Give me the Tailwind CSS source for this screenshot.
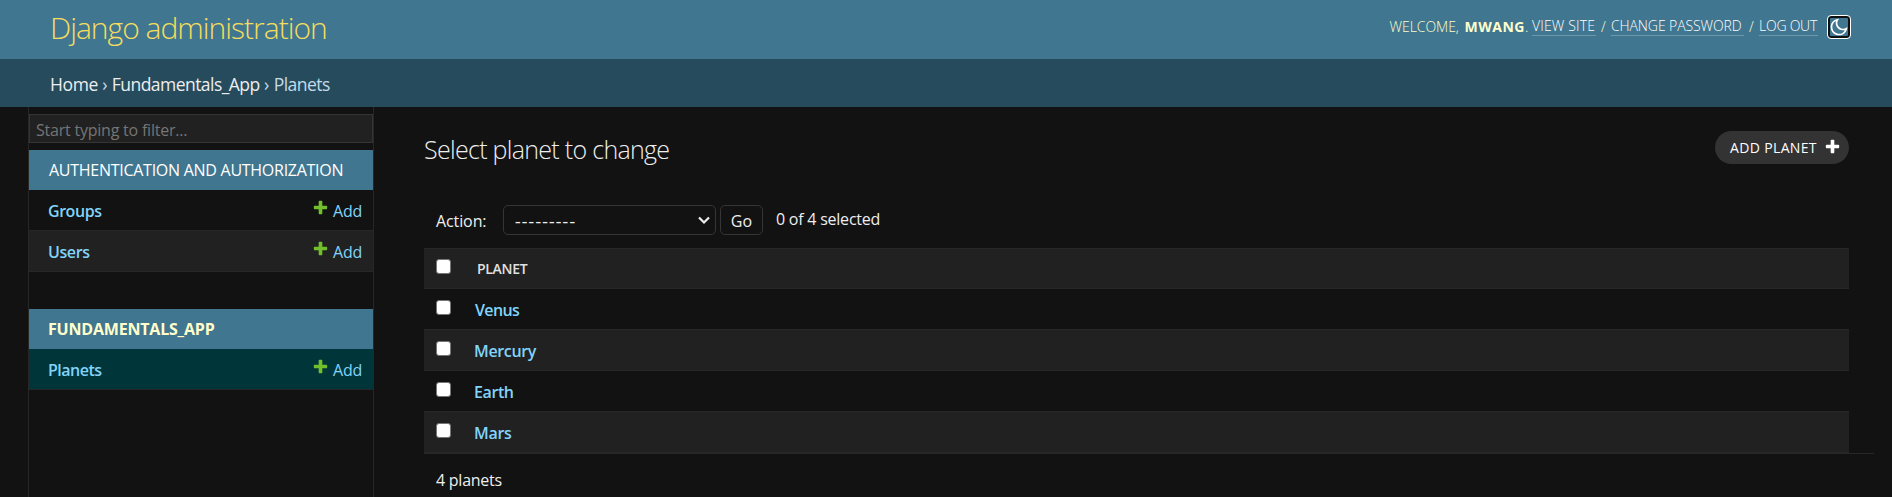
<!DOCTYPE html>
<html lang="en">
<head>
<meta charset="utf-8">
<title>Select planet to change | Django site admin</title>
<script src="https://cdn.jsdelivr.net/npm/@tailwindcss/browser@4"></script>
</head>
<body class="h-[497px] overflow-hidden bg-[#121212] font-['Open_Sans','Noto_Sans',sans-serif] text-base leading-5 text-[#eee]">
<svg class="hidden">
  <symbol id="plus" viewBox="0 0 1792 1792"><path d="M1600 796v192q0 40-28 68t-68 28h-416v416q0 40-28 68t-68 28h-192q-40 0-68-28t-28-68v-416h-416q-40 0-68-28t-28-68v-192q0-40 28-68t68-28h416v-416q0-40 28-68t68-28h192q40 0 68 28t28 68v416h416q40 0 68 28t28 68z"/></symbol>
</svg>

<header class="flex h-[59px] justify-between bg-[#417690] pl-[50px] pr-[41px]">
  <h1 class="pt-2 text-[30px] leading-[40px] font-light tracking-[-1px] whitespace-nowrap text-[#f5dd5d]">Django administration</h1>
  <div class="flex h-[54px] items-center text-sm font-[350] whitespace-nowrap text-[#ffc]">
    <span class="w-[75px] tracking-[-0.05px]">WELCOME,</span>
    <strong class="font-bold tracking-[0.5px]">MWANG</strong><span class="w-[7px]">.</span>
    <a class="h-[18px] w-[64px] border-b border-white/25 leading-[16px] tracking-[0.15px] text-white">VIEW SITE</a>
    <span class="w-[15px] text-center">/</span>
    <a class="h-[18px] w-[133px] border-b border-white/25 leading-[16px] tracking-[-0.1px] text-white">CHANGE PASSWORD</a>
    <span class="w-[15px] text-center">/</span>
    <a class="h-[18px] w-[59px] border-b border-white/25 leading-[16px] tracking-[-0.25px] text-white">LOG OUT</a>
    <button class="ml-[9px] flex size-6 items-center justify-center rounded-[4px] border border-white bg-[#417690] ring-2 ring-[#101010] ring-inset">
      <svg class="size-5 shrink-0" viewBox="0 0 24 24" fill="#fff"><path d="M10 7a7 7 0 0 0 12 4.9v.1c0 5.523-4.477 10-10 10S2 17.523 2 12 6.477 2 12 2h.1A6.979 6.979 0 0 0 10 7zm-6 5a8 8 0 0 0 15.062 3.762A9 9 0 0 1 8.238 4.938 7.999 7.999 0 0 0 4 12z"/></svg>
    </button>
  </div>
</header>

<nav class="flex h-12 bg-[#264b5d] pt-[13px] pl-[50px] text-[17.5px] leading-6 whitespace-nowrap text-[#c4dce8]">
  <a class="tracking-[-0.4px] text-[#eee]">Home</a><span class="w-[14px] text-center">›</span>
  <a class="tracking-[-0.55px] text-[#eee]">Fundamentals_App</a><span class="w-[14px] text-center">›</span>
  <span class="tracking-[-0.5px]">Planets</span>
</nav>

<div class="flex h-[390px]">
  <aside class="ml-7 w-[346px] shrink-0 border-x border-[#272727] pt-[7px] whitespace-nowrap">
    <div class="h-[29px] border border-[#353535] bg-[#212121] pt-[5px] pl-[6px] tracking-[-0.22px] text-[#757575]">Start typing to filter...</div>

    <h2 class="mt-[7px] h-10 bg-[#417690] pt-[10px] pl-5 tracking-[-0.27px] text-white">AUTHENTICATION AND AUTHORIZATION</h2>
    <div class="flex h-[41px] justify-between border-b border-[#272727] pt-[11px] pr-[11px] pl-[19px] text-[#81d4fa]">
      <a class="font-semibold tracking-[-0.45px]">Groups</a>
      <a class="flex gap-1"><svg class="-mt-[2px] size-[17px]" fill="#70bf2b"><use href="#plus"/></svg><span class="tracking-[-0.25px]">Add</span></a>
    </div>
    <div class="flex h-[41px] justify-between border-b border-[#272727] bg-[#212121] pt-[11px] pr-[11px] pl-[19px] text-[#81d4fa]">
      <a class="font-semibold tracking-[-0.4px]">Users</a>
      <a class="flex gap-1"><svg class="-mt-[2px] size-[17px]" fill="#70bf2b"><use href="#plus"/></svg><span class="tracking-[-0.25px]">Add</span></a>
    </div>

    <h2 class="mt-[37px] h-10 bg-[#417690] pt-[10px] pl-[19px] font-bold tracking-[-0.2px] text-[#ffc]">FUNDAMENTALS_APP</h2>
    <div class="flex h-[41px] justify-between border-b border-[#272727] bg-[#00363a] pt-[11px] pr-[11px] pl-[19px] text-[#81d4fa]">
      <a class="font-semibold tracking-[-0.5px]">Planets</a>
      <a class="flex gap-1"><svg class="-mt-[2px] size-[17px]" fill="#70bf2b"><use href="#plus"/></svg><span class="tracking-[-0.25px]">Add</span></a>
    </div>
  </aside>

  <main class="ml-[50px] w-[1450px] whitespace-nowrap">
    <div class="flex h-[98px] justify-between pr-[25px]">
      <h1 class="pt-[26px] text-[25px] leading-[32px] font-light tracking-[-0.7px]">Select planet to change</h1>
      <a class="mt-6 flex h-[33px] w-[134px] items-center rounded-full bg-[#333] pl-[15px] text-sm tracking-[0.35px] text-white">ADD PLANET<svg class="-mt-0.5 ml-[7px] size-[17px]" fill="#fff"><use href="#plus"/></svg></a>
    </div>

    <div class="flex h-[43px] pl-3">
      <span class="w-[67px] pt-[6px] tracking-[-0.1px]">Action:</span>
      <div class="flex h-[30px] w-[213px] items-center justify-between rounded-[5px] border border-[#353535] pr-[5px] pl-[9px]">
        <span class="mt-[5px] font-['Liberation_Mono',monospace] tracking-[-2.8px]">---------</span>
        <svg class="size-3" viewBox="0 0 12 12" fill="none" stroke="#eee" stroke-width="2.2"><path d="M1 3.5l5 5 5-5"/></svg>
      </div>
      <button class="ml-1 h-[30px] w-[43px] rounded-[5px] border border-[#353535] pt-[2px]">Go</button>
      <span class="ml-[13px] pt-[4px] tracking-[-0.23px]">0 of 4 selected</span>
    </div>

    <div class="mr-[25px]">
      <div class="flex h-[41px] border-y border-[#272727] bg-[#212121] pl-3">
        <span class="mt-[10px] size-[15px] rounded-[3px] border border-[#767676] bg-white"></span>
        <span class="ml-[26px] pt-[10px] text-sm leading-5 font-semibold tracking-[-0.3px] text-[#e0e0e0]">PLANET</span>
      </div>
      <div class="flex h-[41px] border-b border-[#272727] pl-3 font-semibold text-[#81d4fa]">
        <span class="mt-[11px] size-[15px] rounded-[3px] border border-[#767676] bg-white"></span>
        <a class="ml-6 pt-[11px] tracking-[-0.65px]">Venus</a>
      </div>
      <div class="flex h-[41px] border-b border-[#272727] bg-[#212121] pl-3 font-semibold text-[#81d4fa]">
        <span class="mt-[11px] size-[15px] rounded-[3px] border border-[#767676] bg-white"></span>
        <a class="ml-[23px] pt-[11px] tracking-[-0.35px]">Mercury</a>
      </div>
      <div class="flex h-[41px] border-b border-[#272727] pl-3 font-semibold text-[#81d4fa]">
        <span class="mt-[11px] size-[15px] rounded-[3px] border border-[#767676] bg-white"></span>
        <a class="ml-[23px] pt-[11px] tracking-[-0.4px]">Earth</a>
      </div>
      <div class="flex h-[41px] border-b border-[#272727] bg-[#212121] pl-3 font-semibold text-[#81d4fa]">
        <span class="mt-[11px] size-[15px] rounded-[3px] border border-[#767676] bg-white"></span>
        <a class="ml-[23px] pt-[11px] tracking-[-0.3px]">Mars</a>
      </div>
    </div>
    <p class="border-t border-[#272727] pt-[16px] pl-3 tracking-[-0.25px]">4 planets</p>
  </main>
</div>
</body>
</html>
